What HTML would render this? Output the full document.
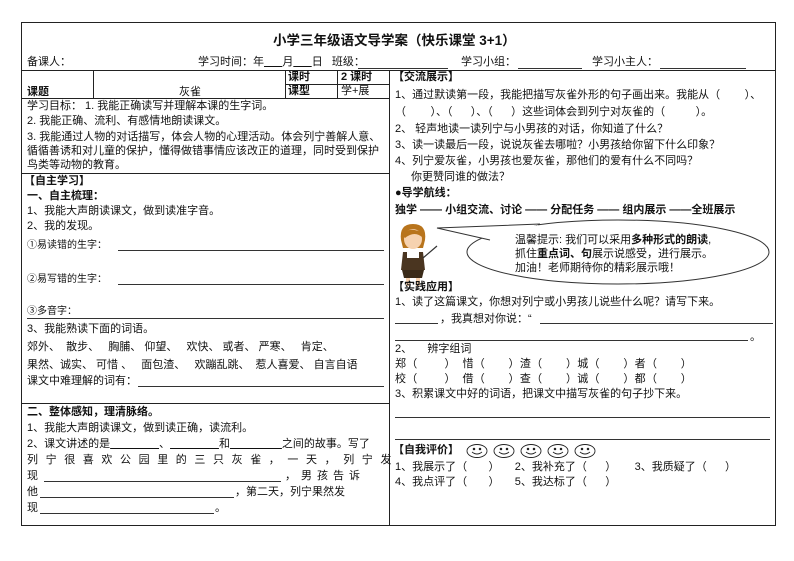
<!DOCTYPE html>
<html><head><meta charset="utf-8"><style>
*{margin:0;padding:0;box-sizing:border-box}
body{width:794px;height:561px;background:#fff;position:relative;overflow:hidden;font-family:"Liberation Sans","Noto Sans CJK SC",sans-serif;font-size:11px;color:#111}
.t{position:absolute;white-space:nowrap;line-height:13px}
.l{position:absolute;background:#222}
.h{height:1px}
.v{width:1px}
.b{font-weight:bold}
.u{position:absolute;height:1px;background:#333}
</style></head><body>
<!-- borders -->
<div class="l h" style="left:21px;top:22px;width:755px"></div>
<div class="l h" style="left:21px;top:525px;width:755px"></div>
<div class="l v" style="left:21px;top:22px;height:504px"></div>
<div class="l v" style="left:775px;top:22px;height:504px"></div>
<div class="l h" style="left:21px;top:70px;width:755px"></div>
<div class="l v" style="left:389px;top:70px;height:455px"></div>
<div class="l v" style="left:93px;top:70px;height:28px"></div>
<div class="l v" style="left:285px;top:70px;height:28px"></div>
<div class="l v" style="left:337px;top:70px;height:28px"></div>
<div class="l h" style="left:285px;top:84px;width:104px"></div>
<div class="l h" style="left:21px;top:98px;width:368px"></div>
<div class="l h" style="left:21px;top:173px;width:368px"></div>
<div class="l h" style="left:21px;top:403px;width:368px"></div>

<div class="t b" style="left:273px;top:33px;font-size:13.5px;line-height:16px">小学三年级语文导学案（快乐课堂 3+1）</div>
<div class="t" style="left:27px;top:56px">备课人：</div>
<div class="t" style="left:198px;top:56px">学习时间：年<span style="text-decoration:underline">&nbsp;&nbsp;&nbsp;&nbsp;&nbsp;&nbsp;</span>月<span style="text-decoration:underline">&nbsp;&nbsp;&nbsp;&nbsp;&nbsp;&nbsp;</span>日&nbsp;&nbsp;&nbsp;班级：</div>
<div class="u" style="left:358px;top:68px;width:90px"></div>
<div class="t" style="left:461px;top:56px">学习小组：</div>
<div class="u" style="left:518px;top:68px;width:64px"></div>
<div class="t" style="left:592px;top:56px">学习小主人：</div>
<div class="u" style="left:660px;top:68px;width:86px"></div>

<div class="t b" style="left:288px;top:71px">课时</div>
<div class="t b" style="left:341px;top:71px">2 课时</div>
<div class="t b" style="left:288px;top:85px">课型</div>
<div class="t" style="left:341px;top:85px">学+展</div>
<div class="t b" style="left:27px;top:86px">课题</div>
<div class="t" style="left:179px;top:86px">灰雀</div>

<div class="t" style="left:27px;top:100px">学习目标： 1. 我能正确读写并理解本课的生字词。</div>
<div class="t" style="left:27px;top:115px">2. 我能正确、流利、有感情地朗读课文。</div>
<div class="t" style="left:27px;top:131px">3. 我能通过人物的对话描写，体会人物的心理活动。体会列宁善解人意、</div>
<div class="t" style="left:27px;top:145px">循循善诱和对儿童的保护，懂得做错事情应该改正的道理，同时受到保护</div>
<div class="t" style="left:27px;top:159px">鸟类等动物的教育。</div>

<div class="t b" style="left:24px;top:175px">【自主学习】</div>
<div class="t b" style="left:27px;top:190px">一、自主梳理：</div>
<div class="t" style="left:27px;top:205px">1、我能大声朗读课文，做到读准字音。</div>
<div class="t" style="left:27px;top:220px">2、我的发现。</div>
<div class="t" style="left:27px;top:239px;font-size:10px">①易读错的生字：</div>
<div class="u" style="left:118px;top:250px;width:266px"></div>
<div class="t" style="left:27px;top:273px;font-size:10px">②易写错的生字：</div>
<div class="u" style="left:118px;top:284px;width:266px"></div>
<div class="t" style="left:27px;top:305px;font-size:10px">③多音字：</div>
<div class="u" style="left:27px;top:318px;width:357px"></div>
<div class="t" style="left:27px;top:323px">3、我能熟读下面的词语。</div>
<div class="t" style="left:27px;top:341px">郊外、&nbsp;&nbsp;散步、&nbsp;&nbsp;&nbsp;胸脯、&nbsp;仰望、&nbsp;&nbsp;&nbsp;欢快、&nbsp;或者、&nbsp;严寒、&nbsp;&nbsp;&nbsp;肯定、</div>
<div class="t" style="left:27px;top:359px">果然、诚实、&nbsp;可惜 、&nbsp;&nbsp;&nbsp;面包渣、&nbsp;&nbsp;&nbsp;欢蹦乱跳、&nbsp;&nbsp;惹人喜爱、&nbsp;自言自语</div>
<div class="t" style="left:27px;top:375px">课文中难理解的词有：</div>
<div class="u" style="left:138px;top:386px;width:246px"></div>

<div class="t b" style="left:27px;top:406px">二、整体感知，理清脉络。</div>
<div class="t" style="left:27px;top:422px">1、我能大声朗读课文，做到读正确，读流利。</div>
<div class="t" style="left:27px;top:438px">2、课文讲述的是<span style="text-decoration:underline">&nbsp;&nbsp;&nbsp;&nbsp;&nbsp;&nbsp;&nbsp;&nbsp;&nbsp;&nbsp;&nbsp;&nbsp;&nbsp;&nbsp;&nbsp;&nbsp;</span>、<span style="text-decoration:underline">&nbsp;&nbsp;&nbsp;&nbsp;&nbsp;&nbsp;&nbsp;&nbsp;&nbsp;&nbsp;&nbsp;&nbsp;&nbsp;&nbsp;&nbsp;&nbsp;</span>和<span style="text-decoration:underline">&nbsp;&nbsp;&nbsp;&nbsp;&nbsp;&nbsp;&nbsp;&nbsp;&nbsp;&nbsp;&nbsp;&nbsp;&nbsp;&nbsp;&nbsp;&nbsp;&nbsp;</span>之间的故事。写了</div>
<div class="t" style="left:27px;top:454px;letter-spacing:7.6px">列宁很喜欢公园里的三只灰雀，一天，列宁发</div>
<div class="t" style="left:27px;top:470px">现</div>
<div class="u" style="left:44px;top:481px;width:237px"></div>
<div class="t" style="left:285px;top:470px;letter-spacing:5px">，男孩告诉</div>
<div class="t" style="left:27px;top:486px">他</div>
<div class="u" style="left:40px;top:497px;width:194px"></div>
<div class="t" style="left:235px;top:486px">，第二天，列宁果然发</div>
<div class="t" style="left:27px;top:502px">现</div>
<div class="u" style="left:40px;top:513px;width:174px"></div>
<div class="t" style="left:215px;top:502px">。</div>

<!-- right -->
<div class="t b" style="left:393px;top:71px">【交流展示】</div>
<div class="t" style="left:395px;top:89px">1、通过默读第一段，我能把描写灰雀外形的句子画出来。我能从（&nbsp;&nbsp;&nbsp;&nbsp;&nbsp;&nbsp;&nbsp;&nbsp;）、</div>
<div class="t" style="left:395px;top:106px">（&nbsp;&nbsp;&nbsp;&nbsp;&nbsp;&nbsp;&nbsp;&nbsp;）、（&nbsp;&nbsp;&nbsp;&nbsp;&nbsp;&nbsp;）、（&nbsp;&nbsp;&nbsp;&nbsp;&nbsp;&nbsp;）这些词体会到列宁对灰雀的（&nbsp;&nbsp;&nbsp;&nbsp;&nbsp;&nbsp;&nbsp;&nbsp;&nbsp;&nbsp;）。</div>
<div class="t" style="left:395px;top:123px">2、 轻声地读一读列宁与小男孩的对话，你知道了什么？</div>
<div class="t" style="left:395px;top:139px">3、读一读最后一段，说说灰雀去哪啦？小男孩给你留下什么印象？</div>
<div class="t" style="left:395px;top:155px">4、列宁爱灰雀，小男孩也爱灰雀，那他们的爱有什么不同吗？</div>
<div class="t" style="left:411px;top:171px">你更赞同谁的做法？</div>
<div class="t b" style="left:395px;top:187px">●导学航线：</div>
<div class="t b" style="left:395px;top:204px">独学 —— 小组交流、讨论 —— 分配任务 —— 组内展示 ——全班展示</div>

<!-- teacher -->
<svg style="position:absolute;left:393px;top:222px" width="50" height="66" viewBox="0 0 50 66">
<path d="M8 18 Q6 2 20 2 Q34 2 32 18 L30 26 L10 26Z" fill="#b8741c"/>
<ellipse cx="20" cy="17" rx="9" ry="10" fill="#f6d2b0"/>
<path d="M10 14 Q14 4 28 10 L30 16 Q22 8 12 16Z" fill="#b8741c"/>
<path d="M10 30 L30 30 L32 48 L8 48Z" fill="#4a3520"/>
<rect x="14" y="30" width="12" height="6" fill="#fff"/>
<path d="M9 48 L31 48 L29 56 L11 56Z" fill="#3a2a18"/>
<rect x="13" y="56" width="4" height="8" fill="#f6d2b0"/><rect x="23" y="56" width="4" height="8" fill="#f6d2b0"/>
<line x1="30" y1="36" x2="44" y2="24" stroke="#333" stroke-width="1.2"/>
</svg>
<svg style="position:absolute;left:430px;top:216px" width="345" height="74" viewBox="0 0 345 74">
<ellipse cx="188" cy="36" rx="151" ry="32" fill="#fff" stroke="#333" stroke-width="1"/>
<path d="M110 8 L7 12 L60 24" fill="#fff" stroke="#333" stroke-width="1"/>
<path d="M62 26 L108 9 L110 16 Z" fill="#fff" stroke="none"/>
</svg>
<div class="t" style="left:515px;top:234px">温馨提示: 我们可以采用<b>多种形式的朗读</b>,</div>
<div class="t" style="left:515px;top:248px">抓住<b>重点词、句</b>展示说感受，进行展示。</div>
<div class="t" style="left:515px;top:262px">加油！老师期待你的精彩展示哦！</div>

<div class="t b" style="left:393px;top:281px">【实践应用】</div>
<div class="t" style="left:395px;top:296px">1、读了这篇课文，你想对列宁或小男孩儿说些什么呢？请写下来。</div>
<div class="u" style="left:395px;top:323px;width:43px"></div>
<div class="t" style="left:440px;top:313px">，我真想对你说：“</div>
<div class="u" style="left:540px;top:323px;width:233px"></div>
<div class="u" style="left:395px;top:340px;width:353px"></div>
<div class="t" style="left:750px;top:331px">。</div>
<div class="t" style="left:395px;top:343px">2、&nbsp;&nbsp;&nbsp;&nbsp;&nbsp;辨字组词</div>
<div class="t" style="left:395px;top:358px;letter-spacing:0.3px">郑（&nbsp;&nbsp;&nbsp;&nbsp;&nbsp;&nbsp;&nbsp;&nbsp;）&nbsp;&nbsp;惜（&nbsp;&nbsp;&nbsp;&nbsp;&nbsp;&nbsp;&nbsp;）渣（&nbsp;&nbsp;&nbsp;&nbsp;&nbsp;&nbsp;&nbsp;）城（&nbsp;&nbsp;&nbsp;&nbsp;&nbsp;&nbsp;&nbsp;）者（&nbsp;&nbsp;&nbsp;&nbsp;&nbsp;&nbsp;&nbsp;）</div>
<div class="t" style="left:395px;top:373px;letter-spacing:0.3px">校（&nbsp;&nbsp;&nbsp;&nbsp;&nbsp;&nbsp;&nbsp;&nbsp;）&nbsp;&nbsp;借（&nbsp;&nbsp;&nbsp;&nbsp;&nbsp;&nbsp;&nbsp;）查（&nbsp;&nbsp;&nbsp;&nbsp;&nbsp;&nbsp;&nbsp;）诚（&nbsp;&nbsp;&nbsp;&nbsp;&nbsp;&nbsp;&nbsp;）都（&nbsp;&nbsp;&nbsp;&nbsp;&nbsp;&nbsp;&nbsp;）</div>
<div class="t" style="left:395px;top:388px">3、积累课文中好的词语，把课文中描写灰雀的句子抄下来。</div>
<div class="u" style="left:395px;top:417px;width:375px"></div>
<div class="u" style="left:395px;top:439px;width:375px"></div>
<div class="t b" style="left:393px;top:444px">【自我评价】</div>
<svg style="position:absolute;left:466px;top:443px" width="140" height="16" viewBox="0 0 140 16">
<g fill="none" stroke="#222" stroke-width="0.9">
<g id="f"><ellipse cx="11" cy="8" rx="10" ry="6.5"/><circle cx="8" cy="6" r="0.8" fill="#222"/><circle cx="14" cy="6" r="0.8" fill="#222"/><path d="M6 9 Q11 13 16 9"/></g>
<use href="#f" x="27"/><use href="#f" x="54"/><use href="#f" x="81"/><use href="#f" x="108"/>
</g></svg>
<div class="t" style="left:395px;top:461px">1、我展示了（&nbsp;&nbsp;&nbsp;&nbsp;&nbsp;&nbsp;&nbsp;）&nbsp;&nbsp;&nbsp;&nbsp;&nbsp;2、我补充了（&nbsp;&nbsp;&nbsp;&nbsp;&nbsp;&nbsp;）&nbsp;&nbsp;&nbsp;&nbsp;&nbsp;&nbsp;3、我质疑了（&nbsp;&nbsp;&nbsp;&nbsp;&nbsp;&nbsp;）</div>
<div class="t" style="left:395px;top:476px">4、我点评了（&nbsp;&nbsp;&nbsp;&nbsp;&nbsp;&nbsp;&nbsp;）&nbsp;&nbsp;&nbsp;&nbsp;&nbsp;5、我达标了（&nbsp;&nbsp;&nbsp;&nbsp;&nbsp;&nbsp;）</div>
</body></html>
